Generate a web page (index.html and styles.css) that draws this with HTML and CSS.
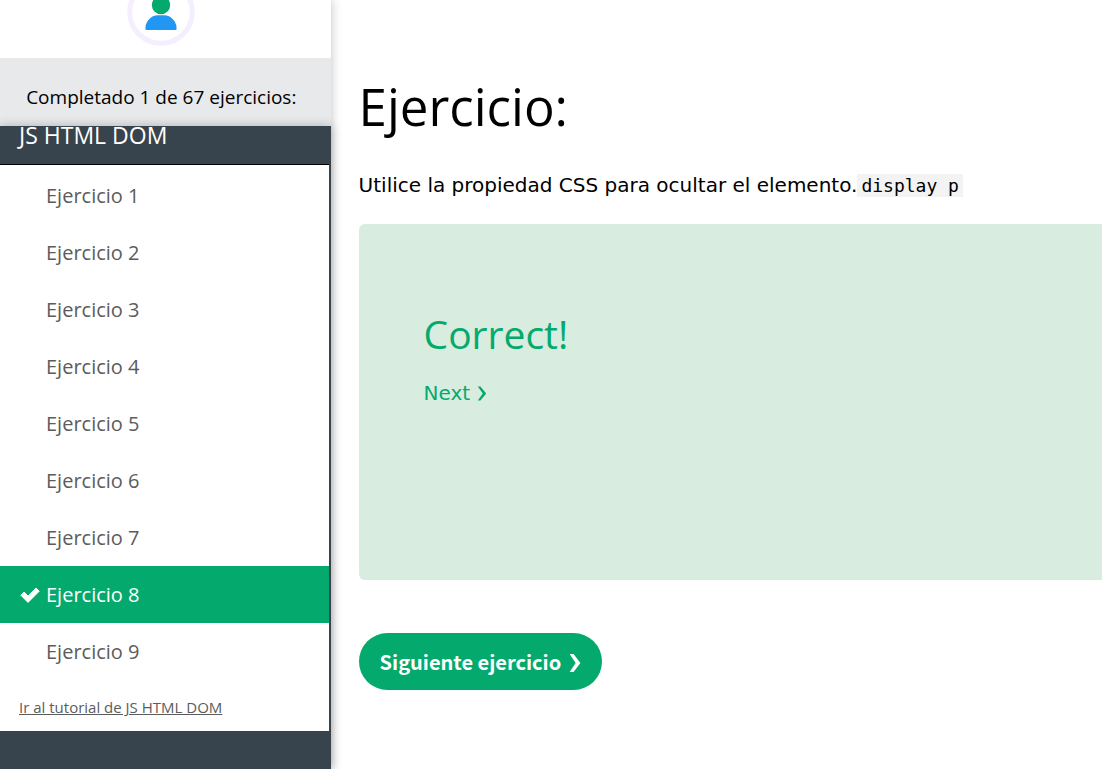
FILE: index.html
```html
<!DOCTYPE html>
<html lang="es">
<head>
<meta charset="utf-8">
<meta name="viewport" content="width=device-width, initial-scale=1">
<title>Ejercicio</title>
<link rel="stylesheet" href="styles.css">
</head>
<body>
<div class="layout">
  <aside class="sidebar">
    <div class="profile">
      <svg class="avatar" viewBox="0 0 68 46" role="img" aria-label="Perfil">
        <circle cx="34" cy="12" r="31.3" fill="none" stroke="#f4eeff" stroke-width="5"/>
        <circle cx="34" cy="5" r="9.2" fill="#04aa6d"/>
        <path d="M19.500 30Q18.300 30 18.400 28.500Q18.500 20 26 16.200Q28 15.300 31 15.300H37Q40 15.300 42 16.200Q49.500 20 49.600 28.500Q49.700 30 48.500 30Z" fill="#2196f3"/>
      </svg>
    </div>
    <p class="progress">Completado 1 de 67 ejercicios:</p>
    <nav class="menu">
      <h2 class="menu-title">JS HTML DOM</h2>
      <div class="menu-body">
        <ul class="list">
          <li><a class="item" href="#1">Ejercicio 1</a></li>
          <li><a class="item" href="#2">Ejercicio 2</a></li>
          <li><a class="item" href="#3">Ejercicio 3</a></li>
          <li><a class="item" href="#4">Ejercicio 4</a></li>
          <li><a class="item" href="#5">Ejercicio 5</a></li>
          <li><a class="item" href="#6">Ejercicio 6</a></li>
          <li><a class="item" href="#7">Ejercicio 7</a></li>
          <li><a class="item active" href="#8" aria-current="page"><svg class="check" viewBox="0 0 20 16" aria-hidden="true"><path d="M.8 8.200 4 5 8 9 16 1 19.200 4.200 8 15.400Z" fill="currentColor" stroke="currentColor" stroke-width="1" stroke-linejoin="round"/></svg>Ejercicio 8</a></li>
          <li><a class="item" href="#9">Ejercicio 9</a></li>
        </ul>
        <a class="tutorial" href="#tutorial">Ir al tutorial de JS HTML DOM</a>
      </div>
    </nav>
  </aside>
  <main class="content">
    <h1 class="title">Ejercicio:</h1>
    <p class="task">Utilice la propiedad CSS para ocultar el elemento.<code class="code">display p</code></p>
    <section class="result">
      <h2 class="result-title">Correct!</h2>
      <a class="next" href="#9">Next <svg class="arrow" viewBox="0 0 10 16" aria-hidden="true"><path d="M.5.500H3.300L9.500 8 3.300 15.500H.5L5.800 8Z" fill="currentColor"/></svg></a>
    </section>
    <button class="button" type="button">Siguiente ejercicio <svg class="arrow arrow-large" viewBox="0 0 10 16" aria-hidden="true"><path d="M.2 0H3.700L9.800 8 3.700 16H.2L5.600 8Z" fill="currentColor"/></svg></button>
  </main>
</div>
</body>
</html>
```
FILE: styles.css
```css
* { box-sizing: border-box; }
body {
  margin: 0;
  background: #fff;
  color: #000;
  font-family: "Open Sans", "Noto Sans", sans-serif;
}
h1, h2, p, ul { margin: 0; padding: 0; font-weight: 400; }
.layout { display: flex; min-height: 100vh; overflow: hidden; }
.sidebar {
  flex: 0 0 30%;
  display: flex;
  flex-direction: column;
  box-shadow: 0 0 10px rgba(0, 0, 0, 0.25);
}
.profile {
  display: flex;
  justify-content: center;
  height: 58px;
  padding-right: 8px;
}
.avatar { width: 68px; height: 46px; }
.progress {
  height: 68px;
  padding: 10px 8px 0 0;
  background: #e7e9eb;
  font-size: 19px;
  line-height: 58px;
  text-align: center;
  white-space: nowrap;
}
.menu {
  flex: 1;
  padding-right: 2px;
  background: #38444d;
  box-shadow: 0 0 10px rgba(0, 0, 0, 0.25);
}
.menu-title {
  height: 39px;
  padding-left: 19px;
  border-bottom: 1px solid #000;
  color: #fff;
  font-size: 23px;
  line-height: 18px;
}
.menu-body { padding: 2px 0 12px; background: #fff; }
.list { list-style: none; }
.item {
  display: flex;
  align-items: center;
  height: 57px;
  padding-left: 46px;
  color: #5c5c5c;
  font-size: 20px;
  line-height: 24px;
  text-decoration: none;
}
.active { gap: 6px; padding-left: 20px; background: #04aa6d; color: #fff; }
.check { width: 20px; height: 16px; }
.tutorial {
  display: block;
  padding: 15px 19px 0;
  color: #5c5c5c;
  font-size: 15px;
  line-height: 24px;
}
.content { flex: 1; min-width: 0; padding: 70px 0 79px 28px; }
.title { font-size: 51px; line-height: 72px; }
.task {
  margin-top: 28px;
  font-family: "DejaVu Sans", sans-serif;
  font-size: 20px;
  line-height: 30px;
}
.code {
  padding: 1px 4px;
  background: #f3f3f3;
  font-family: "DejaVu Sans Mono", monospace;
  font-size: 18px;
}
.result {
  min-height: 356px;
  margin-top: 24px;
  padding: 80px 65px;
  border-radius: 6px 0 0 6px;
  background: #d9ece0;
  color: #04aa6d;
}
.task + .result { margin-top: 23px; }
.result-title { font-size: 39px; line-height: 60px; }
.next {
  display: inline-block;
  margin-top: 15px;
  color: inherit;
  font-family: "DejaVu Sans", sans-serif;
  font-size: 20px;
  line-height: 28px;
  text-decoration: none;
}
.arrow { width: 10px; height: 15px; vertical-align: -1px; }
.button {
  display: block;
  height: 57px;
  margin-top: 53px;
  padding: 0 21px;
  border: 0;
  border-radius: 29px;
  background: #04aa6d;
  color: #fff;
  font-family: "Noto Sans CJK SC", sans-serif;
  font-size: 20px;
  font-weight: 700;
}
.arrow-large { width: 12px; height: 18px; margin-left: 3px; vertical-align: -2px; }
```
